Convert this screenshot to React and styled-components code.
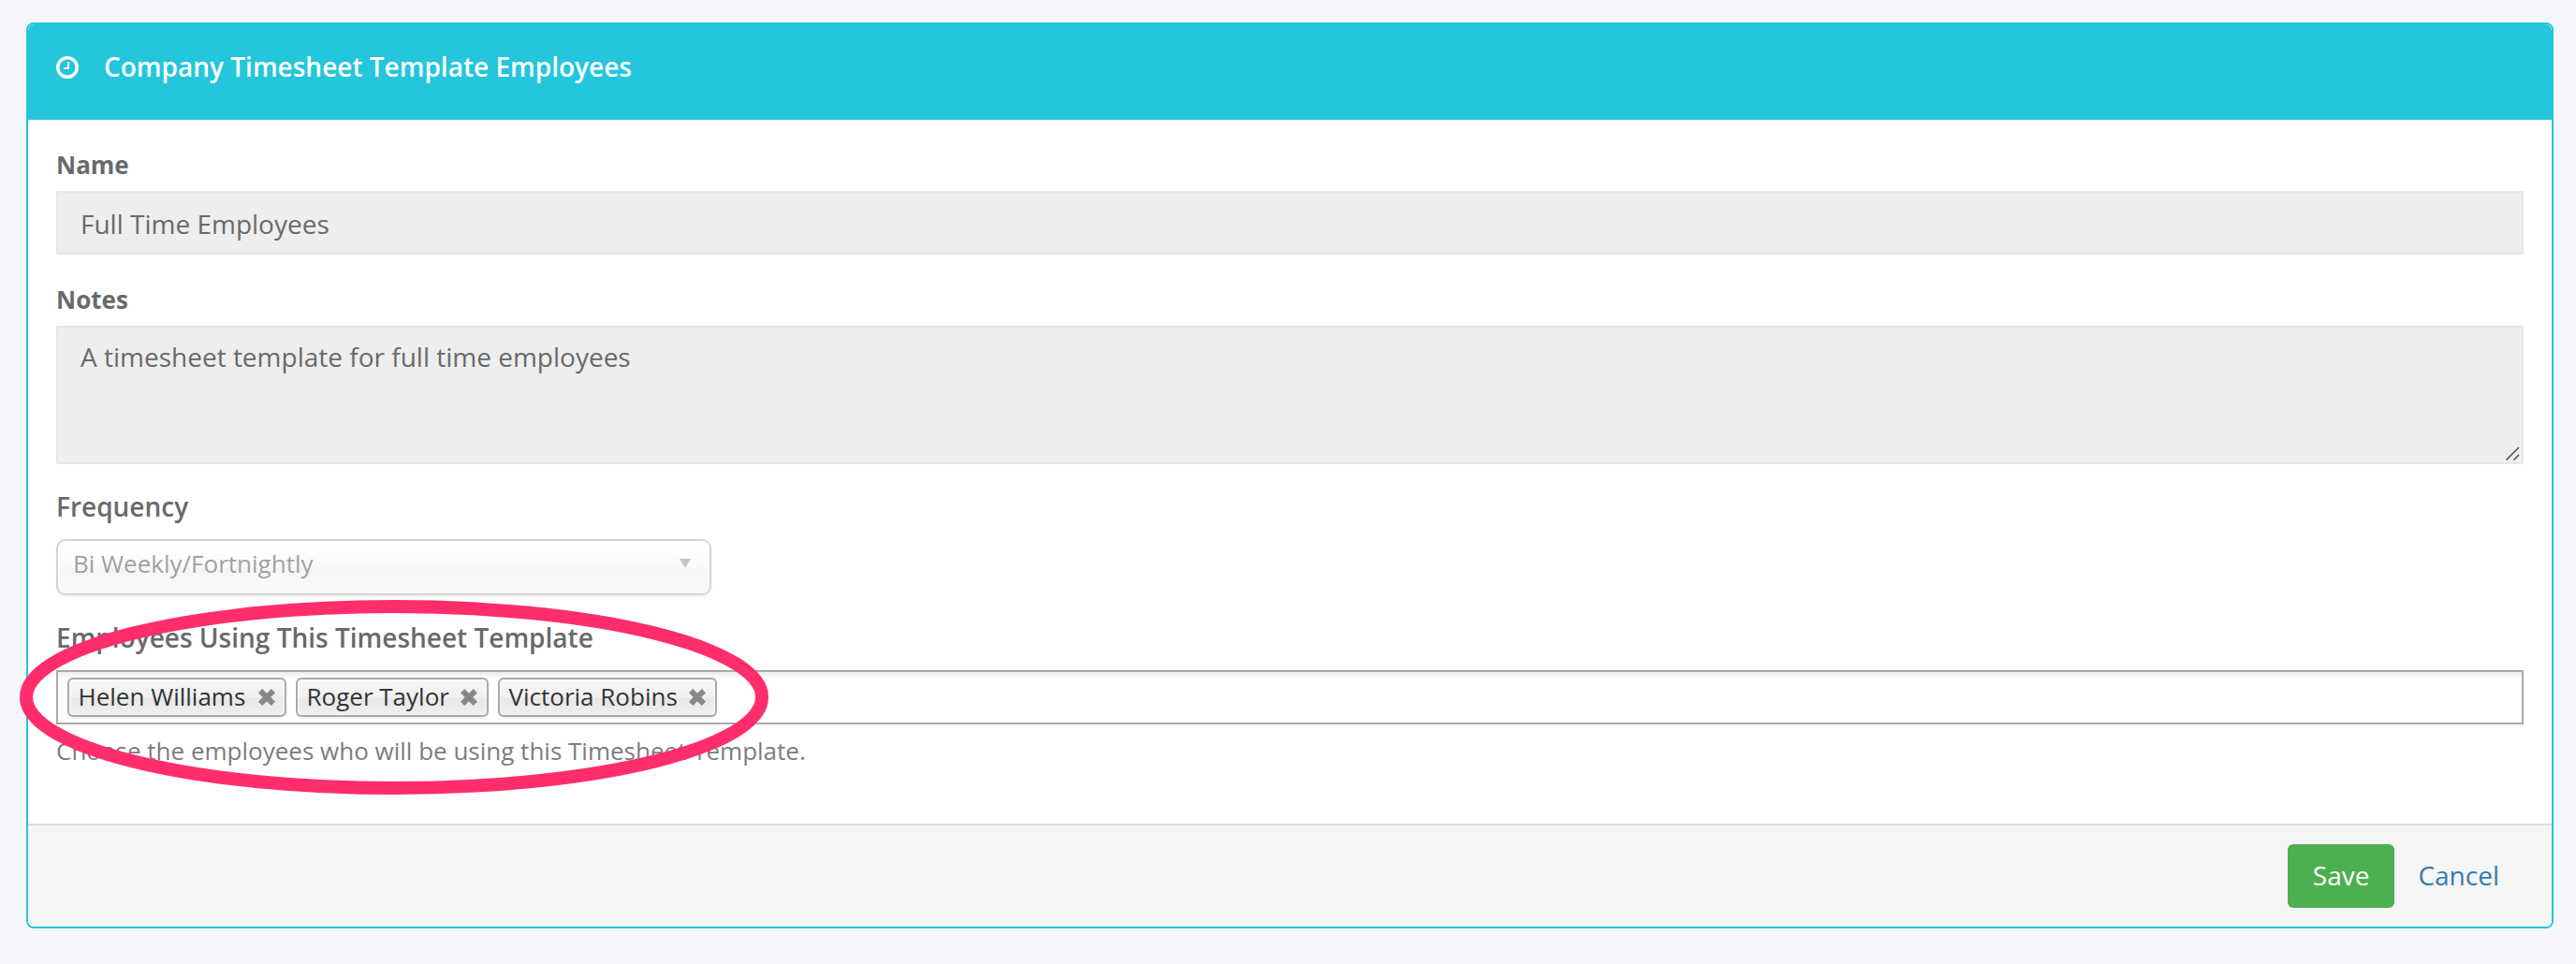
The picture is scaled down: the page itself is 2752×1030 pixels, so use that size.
import React from 'react';
import styled, { createGlobalStyle } from 'styled-components';

const GlobalStyle = createGlobalStyle`
  * {
    box-sizing: border-box;
  }
  body {
    margin: 0;
    background: #f4f6fa;
    color: #676a6c;
    font-family: 'Open Sans', sans-serif;
  }
`;
const Page = styled.div`
  position: relative;
  min-height: 1030px;
  padding: 24px 24px 38px 28px;
`;
const Panel = styled.form`
  display: flex;
  flex-direction: column;
  height: 968px;
  margin: 0;
  border: 2px solid #23c6db;
  border-radius: 8px;
  background: #fff;
`;
const PanelHeading = styled.header`
  display: flex;
  align-items: center;
  height: 102px;
  padding: 0 30px 10px;
  border-radius: 7px 7px 0 0;
  background: #23c6db;
  color: #fff;
`;
const ClockIcon = styled.svg`
  width: 24px;
  height: 24px;
  margin-right: 27px;
  fill: #fff;
`;
const Title = styled.h5`
  margin: 0;
  padding-bottom: 2px;
  font-size: 28px;
  font-weight: 600;
  line-height: 40px;
`;
const PanelBody = styled.div`
  flex: 1;
  padding: 30px 30px 0;
`;
const Group = styled.div`
  display: flex;
  flex-direction: column;
  margin-bottom: ${(props) => props.$gap}px;
`;
const Label = styled.label`
  margin-bottom: ${(props) => (props.$large ? 17 : 10)}px;
  font-size: ${(props) => (props.$large ? 28 : 26)}px;
  font-weight: ${(props) => (props.$large ? 600 : 700)};
  line-height: 36px;
`;
const Input = styled.input`
  height: 68px;
  padding: 2px 24px 0;
  border: 2px solid #e5e6e7;
  border-radius: 2px;
  background: #eee;
  color: #676a6c;
  font: 28px 'Open Sans', sans-serif;
  outline: none;
`;
const TextArea = styled.div`
  display: flex;
  justify-content: space-between;
  align-items: flex-end;
  height: 148px;
  padding: 11px 2px 2px 24px;
  border: 2px solid #e5e6e7;
  border-radius: 2px;
  background: #eee;
  font-size: 28px;
  line-height: 40px;
`;
const TextAreaValue = styled.span`
  align-self: flex-start;
`;
const Grip = styled.svg`
  width: 15px;
  height: 15px;
`;
const Select = styled.div`
  display: flex;
  justify-content: space-between;
  width: 700px;
  height: 60px;
  padding: 6px 20px 0 16px;
  border: 2px solid #aaa;
  border-radius: 10px;
  background: linear-gradient(#fff 20%, #f6f6f6 50%, #eee 52%, #f4f4f4 100%);
  box-shadow: 0 0 6px #fff inset, 0 2px 2px rgba(0, 0, 0, 0.1);
  color: #444;
  font-size: 26px;
  line-height: 36px;
  opacity: 0.5;
`;
const Arrow = styled.svg`
  width: 12px;
  height: 10px;
  margin-top: 13px;
  fill: #888;
`;
const Choices = styled.ul`
  display: flex;
  gap: 10px;
  height: 58px;
  margin: 0;
  padding: 6px 10px;
  border: 2px solid #aaa;
  background: linear-gradient(#eee 1%, #fff 15%);
  list-style: none;
`;
const Choice = styled.li`
  display: flex;
  align-items: center;
  justify-content: space-between;
  width: ${(props) => props.$width}px;
  height: 42px;
  padding: 0 10px 0 9.5px;
  border: 2px solid #aaa;
  border-radius: 6px;
  background: linear-gradient(#f4f4f4 20%, #f0f0f0 50%, #e8e8e8 52%, #eee 100%);
  box-shadow: 0 0 4px #fff inset, 0 2px 0 rgba(0, 0, 0, 0.05);
  color: #333;
  font-size: 26px;
  white-space: nowrap;
`;
const ChoiceName = styled.div`
  padding-bottom: 2px;
  line-height: 36px;
`;
const RemoveIcon = styled.svg`
  width: 18px;
  height: 18px;
  stroke: #888;
  stroke-width: 6;
`;
const Help = styled.span`
  margin-top: 10px;
  color: #7b7d7f;
  font-size: 26px;
  line-height: 36px;
`;
const PanelFooter = styled.footer`
  display: flex;
  justify-content: flex-end;
  align-items: flex-start;
  height: 110px;
  padding: 20px 30px;
  border-top: 2px solid #ddd;
  border-radius: 0 0 6px 6px;
  background: #f5f5f5;
`;
const Button = styled.button`
  height: 68px;
  padding: ${(props) => (props.$primary ? '0 27px 2px' : '0 26px 2px 25px')};
  border: 0;
  border-radius: 6px;
  background: ${(props) => (props.$primary ? '#4caf50' : 'transparent')};
  color: ${(props) => (props.$primary ? '#fff' : '#337ab7')};
  font: 28px 'Open Sans', sans-serif;
`;
const Highlight = styled.svg`
  position: absolute;
  left: 21px;
  top: 641px;
  width: 800px;
  height: 208px;
  fill: none;
  stroke: #ff2d6c;
  stroke-width: 14;
  pointer-events: none;
`;

const employees = [
  { name: 'Helen Williams', width: 234 },
  { name: 'Roger Taylor', width: 206 },
  { name: 'Victoria Robins', width: 234 },
];

const App = () => {
  return (
    <Page>
      <GlobalStyle />
      <Panel>
        <PanelHeading>
          <ClockIcon viewBox="0 128 1536 1536">
            <path d="M896 544v448q0 14-9 23t-23 9h-320q-14 0-23-9t-9-23v-64q0-14 9-23t23-9h224v-352q0-14 9-23t23-9h64q14 0 23 9t9 23zm416 352q0-148-73-273t-198-198-273-73-273 73-198 198-73 273 73 273 198 198 273 73 273-73 198-198 73-273zm224 0q0 209-103 385.5t-279.5 279.5-385.5 103-385.5-103-279.5-279.5-103-385.5 103-385.5 279.5-279.5 385.5-103 385.5 103 279.5 279.5 103 385.5z" />
          </ClockIcon>
          <Title>Company Timesheet Template Employees</Title>
        </PanelHeading>
        <PanelBody>
          <Group $gap={30}>
            <Label>Name</Label>
            <Input readOnly value="Full Time Employees" />
          </Group>
          <Group $gap={27}>
            <Label>Notes</Label>
            <TextArea>
              <TextAreaValue>A timesheet template for full time employees</TextAreaValue>
              <Grip viewBox="0 0 15 15" stroke="#555" strokeWidth="1.6">
                <path d="M0.5 14.5L14 1M8.5 14.5L14 9" />
              </Grip>
            </TextArea>
          </Group>
          <Group $gap={27}>
            <Label $large>Frequency</Label>
            <Select>
              <span>Bi Weekly/Fortnightly</span>
              <Arrow viewBox="0 0 12 10">
                <path d="M0 0h12l-6 10z" />
              </Arrow>
            </Select>
          </Group>
          <Group $gap={0}>
            <Label $large>Employees Using This Timesheet Template</Label>
            <Choices>
              {employees.map((employee) => (
                <Choice key={employee.name} $width={employee.width}>
                  <ChoiceName>{employee.name}</ChoiceName>
                  <RemoveIcon viewBox="0 0 18 18">
                    <path d="M2.1 2.1l13.8 13.8M15.9 2.1l-13.8 13.8" />
                  </RemoveIcon>
                </Choice>
              ))}
            </Choices>
            <Help>Choose the employees who will be using this Timesheet Template.</Help>
          </Group>
        </PanelBody>
        <PanelFooter>
          <Button type="button" $primary>
            Save
          </Button>
          <Button type="button">Cancel</Button>
        </PanelFooter>
      </Panel>
      <Highlight viewBox="0 0 800 208">
        <ellipse cx="400" cy="104" rx="393" ry="97" />
      </Highlight>
    </Page>
  );
};

export default App;
